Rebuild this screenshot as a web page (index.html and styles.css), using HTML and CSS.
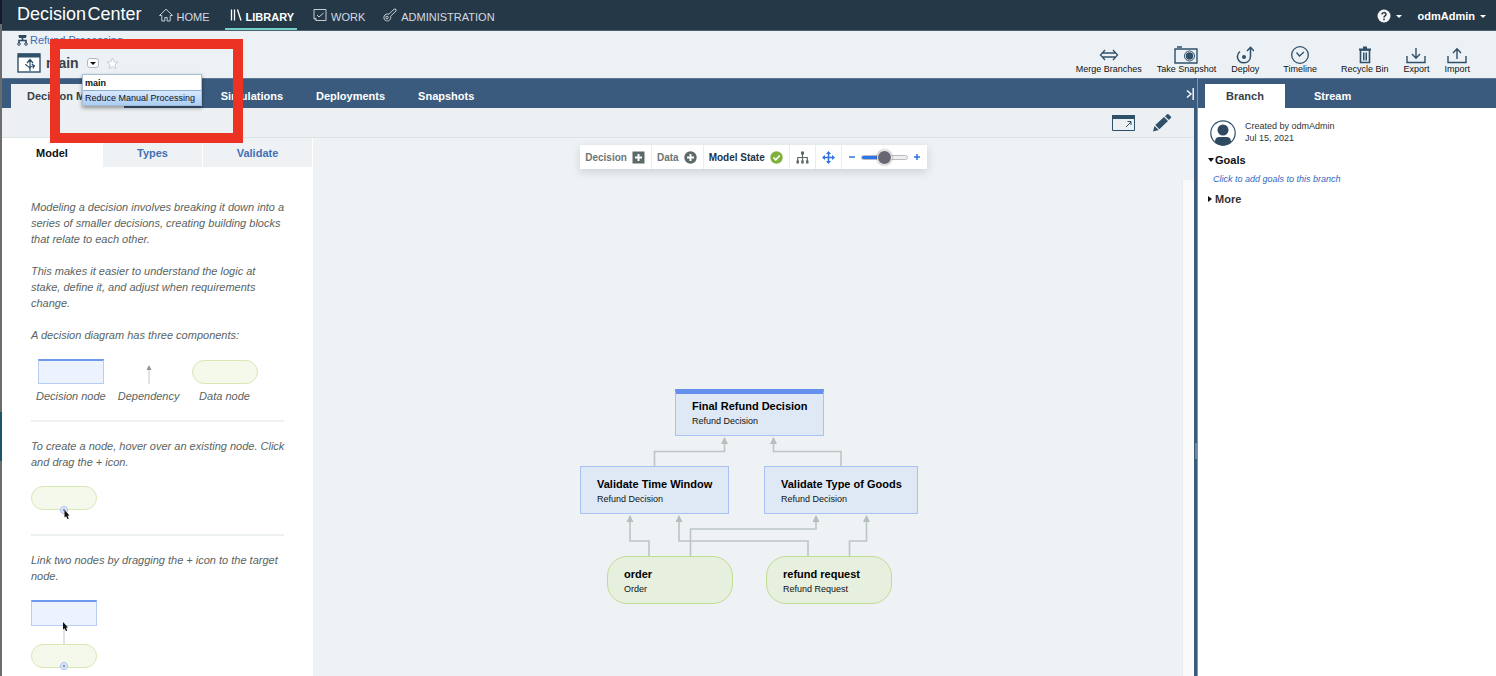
FILE: index.html
```html
<!DOCTYPE html>
<html lang="en">
<head>
<meta charset="utf-8">
<title>Decision Center</title>
<link rel="stylesheet" href="styles.css">
</head>
<body>
<div class="edge"></div>
<div class="app">
  <header class="topbar">
    <span class="brand">Decision&#8202;Center</span>
    <nav class="mainnav">
      <a href="#" class="navlink"><svg width="14" height="14" viewBox="0 0 14 14" fill="none" stroke="#c5cdd3"><path d="M.5 7.500 7 1.200l6.500 6.300h-2.300V13h-3V9.500H5.800V13h-3V7.500z"/></svg>HOME</a>
      <a href="#" class="navlink active"><svg width="12" height="14" viewBox="0 0 12 14" fill="none" stroke="#fff" stroke-width="1.300"><path d="M1.500 1.500v11M4.500 1.500v11M7.500 1.500l3.500 11"/></svg>LIBRARY</a>
      <a href="#" class="navlink"><svg width="14" height="14" viewBox="0 0 14 14" fill="none" stroke="#c5cdd3"><path d="M3 12.500 1 10.500V1.500h12v11zM4 7l2 2 4.500-4M1 10.500h2v2"/></svg>WORK</a>
      <a href="#" class="navlink"><svg width="14" height="14" viewBox="0 0 14 14" fill="none" stroke="#c5cdd3" stroke-linejoin="round"><circle cx="4" cy="9.500" r="1.300"/><path d="M6 6.200 11.200 1 13 1.300v1.800L7.600 8.200c.8 3.300-1.700 5-3.900 4.700C1.300 12.500.3 10 1.200 8 2 6.300 4 5.500 6 6.200z"/></svg>ADMINISTRATION</a>
    </nav>
    <div class="account">
      <button class="topbtn" aria-label="Help"><svg width="14" height="14" viewBox="0 0 14 14"><circle cx="7" cy="7" r="6.500" fill="#f4f6f7"/><path d="M5 5.600C5 3 9 3 9 5.400c0 1.500-2 1.500-2 3M7 9.600v1.600" fill="none" stroke="#253746" stroke-width="1.500"/></svg><i class="caret"></i></button>
      <button class="topbtn user">odmAdmin<i class="caret"></i></button>
    </div>
  </header>

  <section class="header">
    <div class="place">
      <a href="#" class="crumb"><svg width="11" height="11" viewBox="0 0 11 11"><path d="M1.500 1h8M5.500 1.500v4M2 8V5.500h7V8" fill="none" stroke="#2c4a61" stroke-width="1.600"/><circle cx="2" cy="9" r="1.300" fill="none" stroke="#2c4a61"/><circle cx="9" cy="9" r="1.300" fill="none" stroke="#2c4a61"/><path d="M2 0h7v3H2z" fill="#2c4a61"/></svg>Refund Processing</a>
      <div class="branchline">
        <svg width="24" height="20" viewBox="0 0 24 20" fill="none" stroke="#2f5069"><rect x="1" y="1" width="22" height="18" fill="#fff" stroke-width="1.400"/><path d="M1 2.500h22" stroke-width="4"/><path d="M13 18V7M10 10l3-3.500L16 10M8.500 11c0 2 4.500 2 4.500 5M13 16c0-2 1-3 4-3M14.800 11l2.700 2-1.700 2.500" stroke-width="1.200"/></svg>
        <h1>main</h1>
        <button class="drop" aria-label="Choose branch"><i></i></button>
        <button class="star" aria-label="Favorite"><svg width="13" height="13" viewBox="0 0 13 13"><path d="m6.500 1 1.600 3.800 4 .3-3.100 2.600 1 4-3.500-2.200L3 11.700l1-4L.9 5.100l4-.3z" fill="#fff" stroke="#c9ced2"/></svg></button>
        <ul class="menu">
          <li><button class="current">main</button></li>
          <li><button class="hover">Reduce Manual Processing</button></li>
        </ul>
      </div>
    </div>
    <div class="tools">
      <button class="tool"><svg width="20" height="18" viewBox="0 0 20 18" fill="none" stroke="#2f5069" stroke-width="1.300"><path d="M4 7h12M4 11h12M6 4 1.500 9 6 14M14 4l4.500 5L14 14"/></svg>Merge Branches</button>
      <button class="tool"><svg width="24" height="18" viewBox="0 0 24 18" fill="none" stroke="#2f5069" stroke-width="1.400"><path d="M1 3h22v14H1zM3 1h5"/><circle cx="15.500" cy="10" r="5" stroke-width="1"/><circle cx="15.500" cy="10" r="3" fill="#2f5069"/></svg>Take Snapshot</button>
      <button class="tool"><svg width="18" height="18" viewBox="0 0 18 18" fill="none" stroke="#2f5069" stroke-width="1.500"><path d="M4 5.500C-1 9.500 2 17 8 16.800c4 0 6.500-3 6.500-6.800V1.500M11 5l3.500-3.700L18 5"/><circle cx="8" cy="11" r="2" fill="#2f5069" stroke="none"/></svg>Deploy</button>
      <button class="tool apart"><svg width="20" height="18" viewBox="0 0 20 18" fill="none" stroke="#2f5069" stroke-width="1.300"><circle cx="10" cy="9" r="8.300"/><path d="m6.500 6.500 3 3.500 4.500-4"/></svg>Timeline</button>
      <button class="tool apart"><svg width="14" height="18" viewBox="0 0 14 18" fill="none" stroke="#2f5069"><path d="M1 3.500h12M5 1.500h4" stroke-width="2"/><path d="M2.500 4v12.500h9V4z" stroke-width="1.600"/><path d="M5.500 6.500v8M7 6.500v8M8.500 6.500v8"/></svg>Recycle Bin</button>
      <button class="tool"><svg width="20" height="18" viewBox="0 0 20 18" fill="none" stroke="#2f5069" stroke-width="1.400"><path d="M1 10v6.500h18V10M10 2v10M6 8l4 4.300L14 8"/></svg>Export</button>
      <button class="tool"><svg width="20" height="18" viewBox="0 0 20 18" fill="none" stroke="#2f5069" stroke-width="1.400"><path d="M1 10v6.500h18V10M10 13V3M6 7l4-4.300L14 7"/></svg>Import</button>
    </div>
  </section>

  <div class="split">
    <main class="work">
      <div class="tabbar">
        <button class="tab selected">Decision Model</button>
        <button class="tab third">Simulations</button>
        <button class="tab">Deployments</button>
        <button class="tab">Snapshots</button>
        <button class="collapse" aria-label="Collapse panel"><svg width="8" height="12" viewBox="0 0 8 12" fill="none" stroke="#fff" stroke-width="1.400"><path d="m1 2.500 4 3.500-4 3.500M7.200 0v12"/></svg></button>
      </div>
      <div class="subbar">
        <button class="iconbtn" aria-label="Open in window"><svg width="23" height="16" viewBox="0 0 23 16" fill="none" stroke="#2f5069"><path d="M.5.500h22v15H.5z"/><path d="M0 2h23" stroke-width="4"/><path d="m14 12 5-5M15.500 6.500H19V10"/></svg></button>
        <button class="iconbtn" aria-label="Edit"><svg width="20" height="18" viewBox="0 0 20 18" fill="#2f5069"><path d="M1 17.500 2.500 12l4.200 4zM3.300 11 12 3l4 4-8.600 8.200zM12.900 2.200 15 .400c.6-.5 1-.5 1.600 0L18.800 2.500c.6.600.5 1 0 1.600L17 6z"/></svg></button>
      </div>
      <div class="body">
        <aside class="guide">
          <div class="guidetabs">
            <button class="gtab on">Model</button>
            <button class="gtab">Types</button>
            <button class="gtab">Validate</button>
          </div>
          <div class="guidetext">
            <p>Modeling a decision involves breaking it down into a series of smaller decisions, creating building blocks that relate to each other.</p>
            <p>This makes it easier to understand the logic at stake, define it, and adjust when requirements change.</p>
            <p>A decision diagram has three components:</p>
            <div class="legend">
              <figure><i class="box"></i><figcaption>Decision node</figcaption></figure>
              <figure><svg width="8" height="20" viewBox="0 0 8 20"><path d="M4 4v16" stroke="#c4c8c8"/><path d="M4 1 6.500 6h-5z" fill="#8d9494"/></svg><figcaption>Dependency</figcaption></figure>
              <figure class="last"><i class="pill"></i><figcaption>Data node</figcaption></figure>
            </div>
            <hr>
            <p>To create a node, hover over an existing node. Click and drag the + icon.</p>
            <div class="sample"><i class="pill"></i>
              <svg class="handle" width="12" height="14" viewBox="0 0 12 14"><circle cx="5" cy="4" r="3.500" fill="#eef4ff" stroke="#9db9ee"/><path d="M5 2.500v3M3.500 4h3" stroke="#6d7fae"/><path d="M5.500 4v7.500l1.600-1.300 1.300 2.900 1.400-.7-1.300-2.700 2-.2z" fill="#111"/></svg>
            </div>
            <hr>
            <p>Link two nodes by dragging the + icon to the target node.</p>
            <div class="sample stack"><i class="box"></i>
              <svg class="link" width="10" height="22" viewBox="0 0 10 22"><path d="M5 3v19" stroke="#c4c8c8"/><path d="M4 0v7.500l1.600-1.300 1.300 2.900 1.400-.7L7 5.700l2-.2z" fill="#111"/></svg>
              <i class="pill"></i>
              <svg class="handle" width="12" height="14" viewBox="0 0 12 14"><circle cx="5" cy="5" r="3.500" fill="#eef4ff" stroke="#9db9ee"/><path d="M5 3.500v3M3.500 5h3" stroke="#6d7fae"/></svg>
            </div>
          </div>
        </aside>
        <section class="canvas">
          <div class="modelbar">
            <button class="cell">Decision<svg width="13" height="13" viewBox="0 0 13 13"><path d="M.5.500h12v12H.5z" fill="#5d6968"/><path d="M6.500 3v7M3 6.500h7" stroke="#fff" stroke-width="2"/></svg></button>
            <button class="cell">Data<svg width="13" height="13" viewBox="0 0 13 13"><circle cx="6.500" cy="6.500" r="6.200" fill="#5d6968"/><path d="M6.500 3v7M3 6.500h7" stroke="#fff" stroke-width="2"/></svg></button>
            <button class="cell state">Model State<svg width="13" height="13" viewBox="0 0 13 13"><circle cx="6.500" cy="6.500" r="6.200" fill="#7fb13c"/><path d="m3.500 6.500 2.300 2.300L9.800 4.500" fill="none" stroke="#fff" stroke-width="1.600"/></svg></button>
            <button class="cell icon" aria-label="Layout"><svg width="13" height="13" viewBox="0 0 13 13" fill="none" stroke="#5d6968"><path d="M6.500 3v8M1.700 10V6.500h9.600V10" stroke-width="1.200"/><path d="M5 .500h3v3H5zM.5 9.500h2.500v3H.5zM5.200 9.500h2.500v3H5.200zM10 9.500h2.500v3H10z" fill="#5d6968" stroke="none"/></svg></button>
            <button class="cell icon" aria-label="Fit to view"><svg width="13" height="13" viewBox="0 0 13 13"><path d="M6.500 1.500v10M1.500 6.500h10" stroke="#2f74e0" stroke-width="1.500"/><path d="m6.500 0 2.500 3H4zM6.500 13 4 10h5zM0 6.500 3 4v5zM13 6.500 10 9V4z" fill="#2f74e0"/></svg></button>
            <div class="cell zoom">
              <button aria-label="Zoom out"><svg width="8" height="8" viewBox="0 0 8 8"><path d="M1 4h6" stroke="#2f74e0" stroke-width="1.500"/></svg></button>
              <input type="range" min="0" max="100" value="50" aria-label="Zoom">
              <button aria-label="Zoom in"><svg width="8" height="8" viewBox="0 0 8 8"><path d="M1 4h6M4 1v6" stroke="#2f74e0" stroke-width="1.500"/></svg></button>
            </div>
          </div>
          <div class="stage">
            <div class="diagram">
              <svg class="edges" width="338" height="216" viewBox="0 0 338 216">
                <defs><marker id="tip" markerUnits="userSpaceOnUse" markerWidth="8" markerHeight="8" refX="6" refY="4" orient="auto"><path d="M0 .500 7 4 0 7.500z" fill="#b5bfbe"/></marker></defs>
                <g fill="none" stroke="#bcc6c5" stroke-width="1.600">
                  <path d="M74.500 79V63.500h70V50" marker-end="url(#tip)"/>
                  <path d="M261 79V63.500h-67.500V50" marker-end="url(#tip)"/>
                  <path d="M69 169V153H50V128" marker-end="url(#tip)"/>
                  <path d="M110.500 169V141H236V128" marker-end="url(#tip)"/>
                  <path d="M228 169V153H99V128" marker-end="url(#tip)"/>
                  <path d="M269.500 169V153H286.500V128" marker-end="url(#tip)"/>
                </g>
              </svg>
              <div class="node final"><b>Final Refund Decision</b><span>Refund Decision</span></div>
              <div class="node window"><b>Validate Time Window</b><span>Refund Decision</span></div>
              <div class="node goods"><b>Validate Type of Goods</b><span>Refund Decision</span></div>
              <div class="node data order"><b>order</b><span>Order</span></div>
              <div class="node data request"><b>refund request</b><span>Refund Request</span></div>
            </div>
            <div class="track"></div>
          </div>
        </section>
      </div>
    </main>
    <div class="gutter"><i></i></div>
    <aside class="side">
      <div class="tabbar">
        <button class="tab selected">Branch</button>
        <button class="tab">Stream</button>
      </div>
      <div class="info">
        <div class="creator">
          <svg width="26" height="26" viewBox="0 0 26 26"><circle cx="13" cy="13" r="12.200" fill="#fff" stroke="#2f5069" stroke-width="1.200"/><circle cx="13" cy="10" r="5.500" fill="#2f4a60"/><path d="M5 22c0-4 2-5 5-5h6c3 0 5 1 5 5-4 4.500-12 4.500-16 0z" fill="#2f4a60"/></svg>
          <div>Created by odmAdmin<br>Jul 15, 2021</div>
        </div>
        <button class="fold open"><i></i>Goals</button>
        <a href="#" class="addgoal">Click to add goals to this branch</a>
        <button class="fold"><i></i>More</button>
      </div>
    </aside>
  </div>
</div>
<div class="highlight"></div>
</body>
</html>
```
FILE: styles.css
```css
* { box-sizing: border-box; }
body {
  margin: 0;
  height: 100vh;
  display: flex;
  overflow: hidden;
  position: relative;
  font-family: "Liberation Sans", Arial, sans-serif;
  font-size: 11px;
  color: #222;
  background: #fff;
}
button { font: inherit; color: inherit; background: none; border: 0; padding: 0; }
a { text-decoration: none; }
svg { display: block; flex: none; }
p, h1, ul, figure { margin: 0; padding: 0; }

.edge {
  width: 2px;
  background: linear-gradient(#141b2b 24px, #6d6d70 24px 412px, #1b5566 412px 461px, #6d6d70 461px);
}
.app { flex: 1; min-width: 0; display: flex; flex-direction: column; }

.topbar {
  height: 31px;
  flex: none;
  display: flex;
  background: #253847;
  border-bottom: 1px solid #4c6072;
  color: #d5dbe0;
}
.brand { font-size: 18px; line-height: 29px; color: #fff; margin: 0 15px 0 15px; white-space: nowrap; }
.mainnav { display: flex; gap: 14px; }
.navlink {
  display: flex;
  align-items: center;
  gap: 4px;
  padding: 5px 2px 0 2px;
  border-bottom: 2px solid transparent;
  color: #d5dbe0;
}
.navlink svg { margin-bottom: 4px; }
.navlink.active { color: #fff; font-weight: bold; border-color: #74d0c8; padding: 5px 3px 0 5px; margin: 0 0 0 -1px; }
.account { margin-left: auto; display: flex; align-items: center; gap: 16px; padding: 2px 10px 0 0; }
.topbtn { display: flex; align-items: center; gap: 5px; color: #fff; font-weight: bold; }
.caret { border: 3px solid transparent; border-top-color: #fff; border-bottom: 0; }

.header {
  height: 47px;
  flex: none;
  display: flex;
  justify-content: space-between;
  padding: 0 26px 0 15px;
  background: #ecf1f5;
}
.place { padding-top: 2px; }
.crumb { display: flex; align-items: center; gap: 2px; height: 14px; color: #3d6db5; }
.branchline { position: relative; display: flex; align-items: center; height: 26px; margin-top: 3px; }
.branchline h1 { font-size: 14px; color: #3b4148; margin: 0 8px 0 5px; }
.drop {
  width: 12px;
  height: 10px;
  border: 1px solid #b3b8bc;
  border-radius: 3px;
  background: #fff;
  display: grid;
  place-items: center;
}
.drop i { border: 3px solid transparent; border-top: 3px solid #111; border-bottom: 0; }
.star { margin-left: 7px; }
.menu {
  position: absolute;
  z-index: 3;
  left: 65px;
  top: 24px;
  width: 120px;
  list-style: none;
  border: 1px solid #a9bdd3;
  background: #fff;
  box-shadow: 0 2px 4px rgba(0, 0, 0, .4);
}
.menu button { display: block; width: 100%; height: 15px; padding: 0 2px; text-align: left; white-space: nowrap; font-size: 9px; color: #111; }
.menu .current { font-weight: bold; }
.menu .hover { background: linear-gradient(#d8e9fd, #abcdf5); border-top: 1px solid #8cacd0; }

.tools { display: flex; gap: 15px; padding-top: 15px; }
.tool { display: flex; flex-direction: column; align-items: center; height: 28px; font-size: 9px; line-height: 10px; white-space: nowrap; color: #111; }
.tool.apart { margin-left: 9px; }

.split { flex: 1; min-height: 0; display: flex; }
.work { flex: 1; min-width: 0; display: flex; flex-direction: column; }
.tabbar {
  height: 30px;
  flex: none;
  display: flex;
  align-items: flex-end;
  gap: 1px;
  padding-left: 9px;
  background: #3b5b7e;
  border-top: 1px solid #5d7893;
  font-weight: bold;
}
.tab { height: 24px; padding: 0 16px; color: #fff; }
.tab.selected { background: #ecf0f3; color: #3b4148; }
.tab.third { margin-left: 80px; }
.collapse { margin: 0 0 8px auto; }
.subbar {
  height: 30px;
  flex: none;
  display: flex;
  justify-content: flex-end;
  align-items: center;
  gap: 17px;
  padding-right: 22px;
  background: #ecf0f3;
  border-bottom: 1px solid #dde2e5;
}
.body { flex: 1; min-height: 0; display: flex; }

.guide { width: 311px; flex: none; background: #fff; overflow: hidden; }
.guidetabs { display: grid; grid-template-columns: 100px 99px 109px; gap: 1px; padding-right: 1px; }
.gtab { height: 29px; font-weight: bold; color: #4270b5; background: #eff2f4; }
.gtab.on { color: #111; background: #fff; }
.guidetext { padding: 32px 27px 0 29px; font-style: italic; line-height: 16px; color: #596463; }
.guidetext p { margin-bottom: 16px; }
.guidetext hr { border: 0; height: 2px; margin: 0 2px 16px 0; background: #edf1f2; }
.legend { display: flex; gap: 12px; padding-left: 5px; height: 61px; }
.legend figure { display: flex; flex-direction: column; align-items: center; justify-content: flex-end; gap: 4px; height: 45px; white-space: nowrap; }
.box { display: block; width: 66px; height: 26px; background: #ecf3fe; border: 1px solid #b8cdf6; border-top: 2px solid #6c98f0; }
.pill { display: block; width: 66px; height: 24px; border: 1px solid #d8e8b4; border-radius: 12px; background: #f5f9ec; }
.sample { position: relative; width: 66px; padding-bottom: 24px; }
.sample .handle { position: absolute; left: 28px; top: 20px; }
.stack .handle { top: 61px; }
.stack .link { margin: -4px auto 0; }

.canvas { flex: 1; min-width: 0; display: flex; flex-direction: column; align-items: center; background: #eef2f4; }
.modelbar { display: flex; margin-top: 7px; height: 24px; background: #fff; box-shadow: 0 3px 10px rgba(60, 80, 90, .2); }
.cell { display: flex; align-items: center; gap: 5px; padding: 0 6px 0 5px; border-right: 1px solid #e9edef; font-size: 10px; font-weight: bold; color: #6d7675; white-space: nowrap; }
.cell.state { color: #1c3347; }
.cell.icon { padding: 0 6px; }
.cell.zoom { border: 0; padding: 0 6px; }
.zoom input { -webkit-appearance: none; appearance: none; width: 47px; height: 16px; margin: 0; background: none; }
.zoom input::-webkit-slider-runnable-track { height: 5px; border: 1px solid #b9b9c0; border-radius: 3px; background: linear-gradient(90deg, #2f74e8 50%, #efeff2 50%); }
.zoom input::-webkit-slider-thumb { -webkit-appearance: none; width: 15px; height: 15px; margin-top: -6px; border: 1px solid #fff; border-radius: 50%; background: #686773; box-shadow: 0 0 2px rgba(0, 0, 0, .5); }
.stage { position: relative; flex: 1; align-self: stretch; margin-top: 11px; padding: 208px 9px 0 0; }
.track { position: absolute; right: 0; top: 0; bottom: 0; width: 12px; background: #fafafa; border-left: 1px solid #e8ebec; }
.diagram { position: relative; width: 338px; height: 216px; margin: 0 auto; }
.edges { position: absolute; left: 0; top: 0; }
.node { position: absolute; width: 149px; height: 48px; padding: 10px 16px; border: 1px solid #a9c1f3; background: #dfe9f5; color: #111; white-space: nowrap; }
.node b, .node span { display: block; line-height: 15px; }
.node b { color: #000; }
.node span { font-size: 9px; line-height: 14px; }
.final { left: 95px; top: 1px; height: 47px; padding-top: 5px; border-top: 5px solid #6590ee; }
.window { left: 0; top: 78px; }
.goods { left: 184px; top: 78px; width: 154px; }
.data { width: 126px; border: 1px solid #c0dd93; border-radius: 20px; background: #e7efdf; }
.order { left: 27px; top: 168px; }
.request { left: 186px; top: 168px; }

.gutter { width: 4px; flex: none; display: flex; align-items: center; background: #3b5b7e; border-right: 1px solid #8195aa; }
.gutter i { width: 2px; height: 16px; margin: 148px 0 0 1px; background: #6c86a1; }
.side { width: 298px; flex: none; background: #fff; }
.side .tabbar { padding-left: 7px; }
.side .tab { padding: 0 28px; }
.side .tab.selected { background: #fff; padding: 0 21px; }
.info { padding: 12px 10px 0; display: flex; flex-direction: column; align-items: flex-start; }
.creator { display: flex; gap: 9px; padding-left: 2px; font-size: 9px; line-height: 12px; color: #333; }
.fold { display: flex; align-items: center; gap: 3px; height: 18px; margin-top: 5px; font-weight: bold; color: #333; }
.fold.open { color: #111; gap: 1px; }
.fold i { border: 3px solid transparent; border-left: 4px solid #111; border-right: 0; }
.fold.open i { border: 3px solid transparent; border-top: 4px solid #111; border-bottom: 0; }
.addgoal { margin: 4px 0 0 5px; font-size: 9px; font-style: italic; line-height: 12px; color: #2f6abf; }

.highlight {
  position: absolute;
  z-index: 4;
  left: 50px;
  top: 39px;
  width: 193px;
  height: 104px;
  border: 10px solid #ec3323;
  pointer-events: none;
}
```
